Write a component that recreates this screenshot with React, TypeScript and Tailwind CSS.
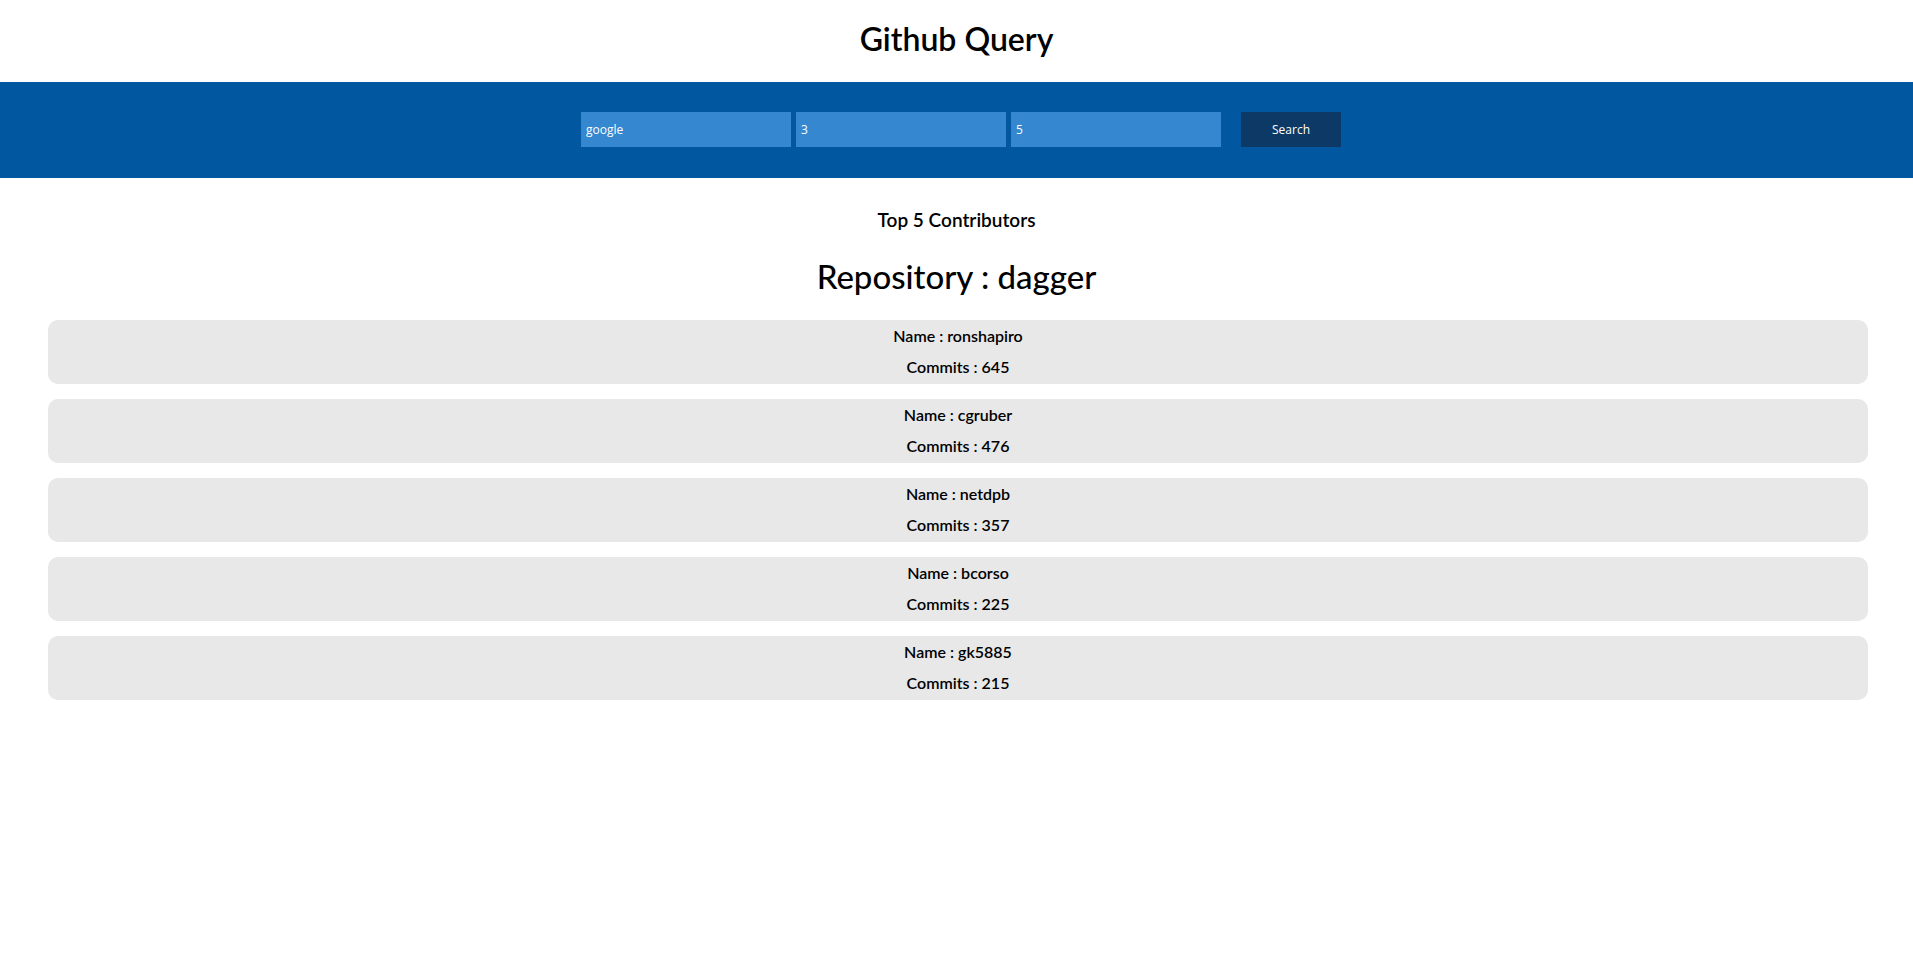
import React from "react";

const contributors = [
  { name: "ronshapiro", commits: 645 },
  { name: "cgruber", commits: 476 },
  { name: "netdpb", commits: 357 },
  { name: "bcorso", commits: 225 },
  { name: "gk5885", commits: 215 },
];

export default function App() {
  return (
    <div className="min-h-screen bg-white text-black font-['Lato','Open_Sans',sans-serif]">
      <header className="h-[82px] flex items-center justify-center">
        <h1 className="text-[32px] font-semibold leading-none pb-[4px]">Github Query</h1>
      </header>

      <div className="bg-[#0157a0] pt-[30px] pb-[31px] flex justify-center">
        <div className="flex items-center pl-[9px] font-['Open_Sans',sans-serif] text-[12px] text-white">
          <input
            defaultValue="google"
            className="w-[210px] h-[35px] bg-[#3588d0] px-[5px] outline-none"
          />
          <input
            defaultValue="3"
            className="ml-[5px] w-[210px] h-[35px] bg-[#3588d0] px-[5px] outline-none"
          />
          <input
            defaultValue="5"
            className="ml-[5px] w-[210px] h-[35px] bg-[#3588d0] px-[5px] outline-none"
          />
          <button className="ml-[20px] w-[100px] h-[35px] bg-[#0c3966] text-white">
            Search
          </button>
        </div>
      </div>

      <main className="pt-[29px]">
        <h3 className="text-center text-[19px] font-semibold leading-[26px]">
          Top 5 Contributors
        </h3>
        <h2 className="mt-[23px] text-center text-[33px] font-medium leading-[40px]">
          Repository : dagger
        </h2>
        <div className="mt-[24px] ml-[48px] mr-[45px] flex flex-col gap-[15px]">
          {contributors.map((c) => (
            <div
              key={c.name}
              className="bg-[#e8e8e8] rounded-[10px] pt-1 pb-[5px] flex flex-col gap-[7px] items-center text-[16px] font-semibold leading-6"
            >
              <p>Name : {c.name}</p>
              <p>Commits : {c.commits}</p>
            </div>
          ))}
        </div>
      </main>
    </div>
  );
}
